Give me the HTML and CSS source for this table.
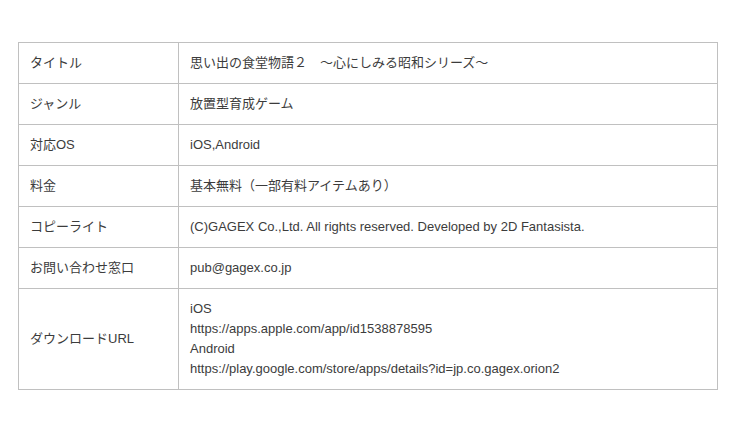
FILE: index.html
```html
<!DOCTYPE html>
<html lang="ja">
<head>
<meta charset="utf-8">
<link rel="stylesheet" href="styles.css">
</head>
<body>
<table class="spec">
<tr><th>タイトル</th><td>思い出の食堂物語２　～心にしみる昭和シリーズ～</td></tr>
<tr><th>ジャンル</th><td>放置型育成ゲーム</td></tr>
<tr><th>対応OS</th><td>iOS,Android</td></tr>
<tr><th>料金</th><td>基本無料（一部有料アイテムあり）</td></tr>
<tr><th>コピーライト</th><td>(C)GAGEX Co.,Ltd. All rights reserved. Developed by 2D Fantasista.</td></tr>
<tr><th>お問い合わせ窓口</th><td>pub@gagex.co.jp</td></tr>
<tr><th>ダウンロードURL</th><td>iOS<br>https://apps.apple.com/app/id1538878595<br>Android<br>https://play.google.com/store/apps/details?id=jp.co.gagex.orion2</td></tr>
</table>
</body>
</html>
```
FILE: styles.css
```css
html, body {
  margin: 0;
  padding: 0;
  background: #fff;
}
body {
  padding: 42px 0 0 18px;
  font-family: "Liberation Sans", "Noto Sans CJK JP", sans-serif;
  font-size: 13px;
  color: #3c3c3c;
}
.spec {
  border-collapse: collapse;
  width: 700px;
}
.spec th, .spec td {
  border: 1px solid #c0c0c0;
  padding: 10px 11px;
  line-height: 20px;
  text-align: left;
  font-weight: normal;
  vertical-align: middle;
}
.spec th {
  width: 137px;
}
```
